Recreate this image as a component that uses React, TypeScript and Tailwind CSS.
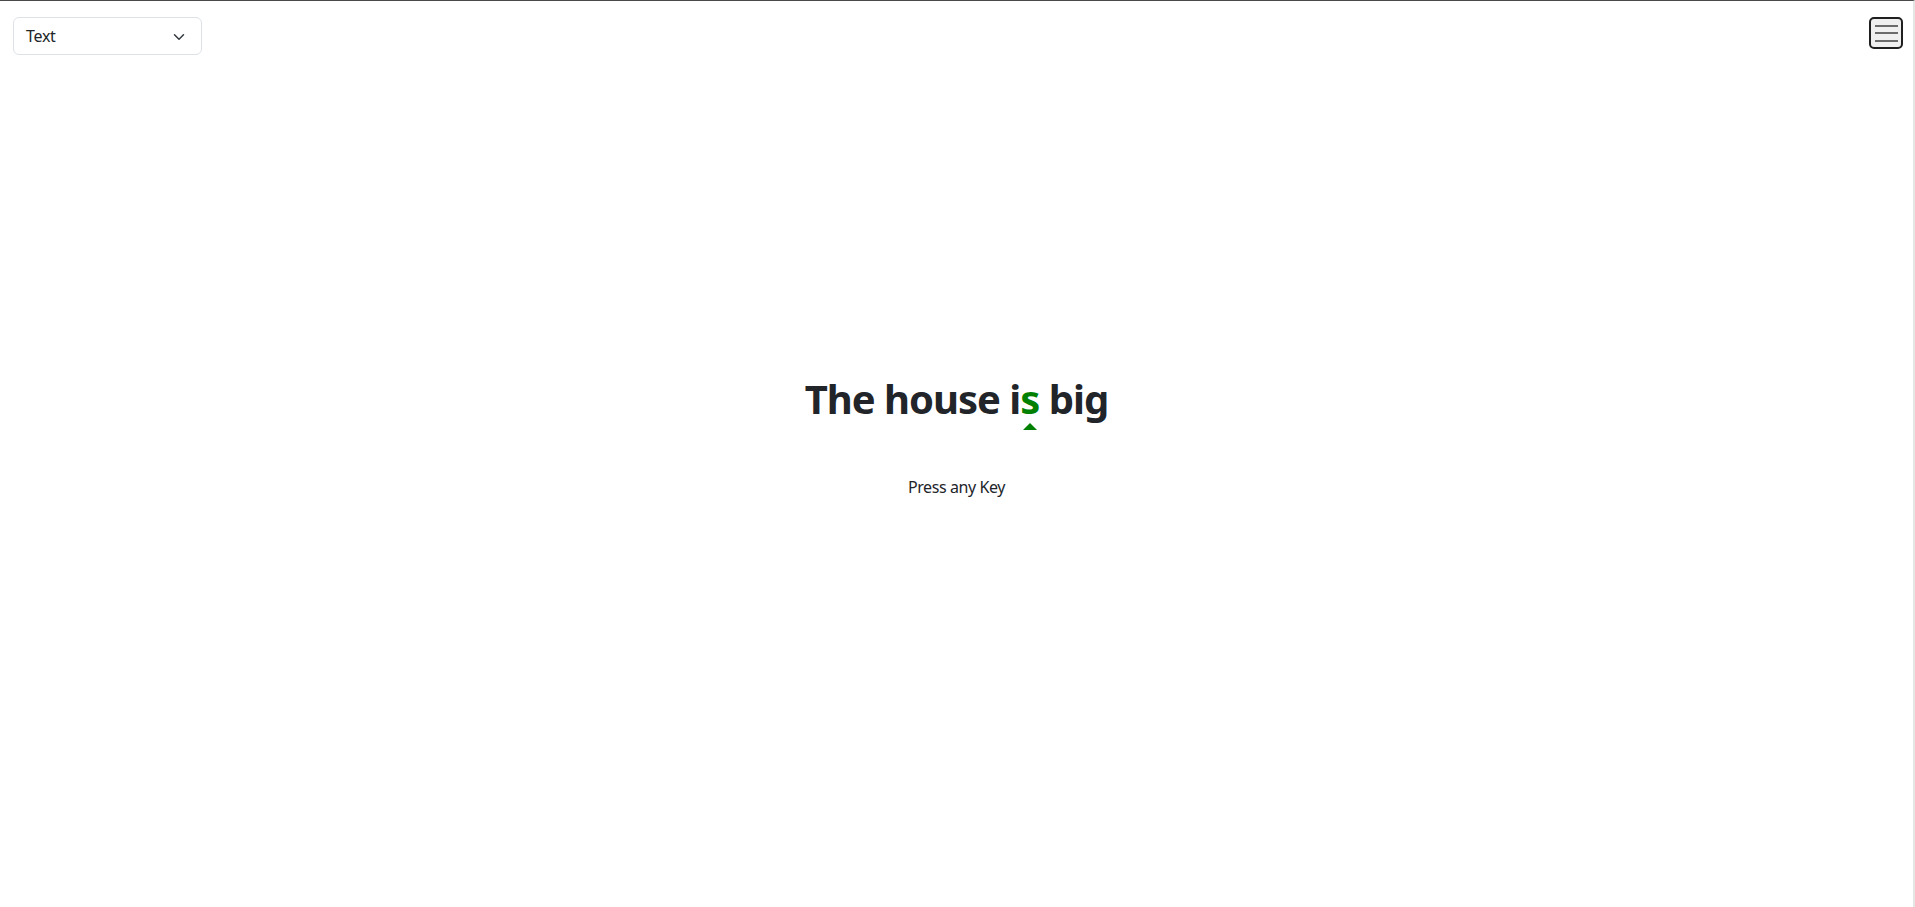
import React from "react";

export default function App() {
  return (
    <div className="min-h-screen w-full bg-white border-t border-t-[#4a4a4a] border-r-2 border-r-[#e5e5e5] text-[#212529] font-['Noto_Sans',sans-serif]">
      <div className="flex items-start justify-between pt-4 pl-[13px] pr-[10px]">
        <div className="flex h-[38px] w-[189px] items-center justify-between rounded-[6px] border border-[#dee2e6] bg-white pl-[12px] pr-[14px] text-[16px] tracking-[-0.3px] text-[#212529]">
          <span>Text</span>
          <svg width="16" height="12" viewBox="0 0 16 16" fill="none" className="mt-[1px]">
            <path d="m2 5 6 6 6-6" stroke="#343a40" strokeWidth="2" strokeLinecap="round" strokeLinejoin="round" />
          </svg>
        </div>
        <button className="flex h-[32px] w-[34px] flex-col items-center justify-center gap-[5.5px] rounded-[5px] border-2 border-[#1f1f1f] bg-[#efefef]">
          <span className="block h-[2px] w-[23px] bg-[#6b6b6b]" />
          <span className="block h-[2px] w-[23px] bg-[#6b6b6b]" />
          <span className="block h-[2px] w-[23px] bg-[#6b6b6b]" />
        </button>
      </div>
      <div className="flex flex-col items-center mt-[320px]">
        <h1 className="text-[40px] leading-[48px] font-bold tracking-[-1px] text-[#212529]">
          The house i
          <span className="relative text-[#008000]">
            s
            <span className="absolute left-1/2 top-[52px] -translate-x-1/2 h-0 w-0 border-l-[7.5px] border-r-[7.5px] border-b-[7px] border-l-transparent border-r-transparent border-b-[#008000]" />
          </span>{" "}
          big
        </h1>
        <p className="mt-[52px] text-[16px] leading-[24px] tracking-[-0.4px] text-[#212529]">Press any Key</p>
      </div>
    </div>
  );
}
